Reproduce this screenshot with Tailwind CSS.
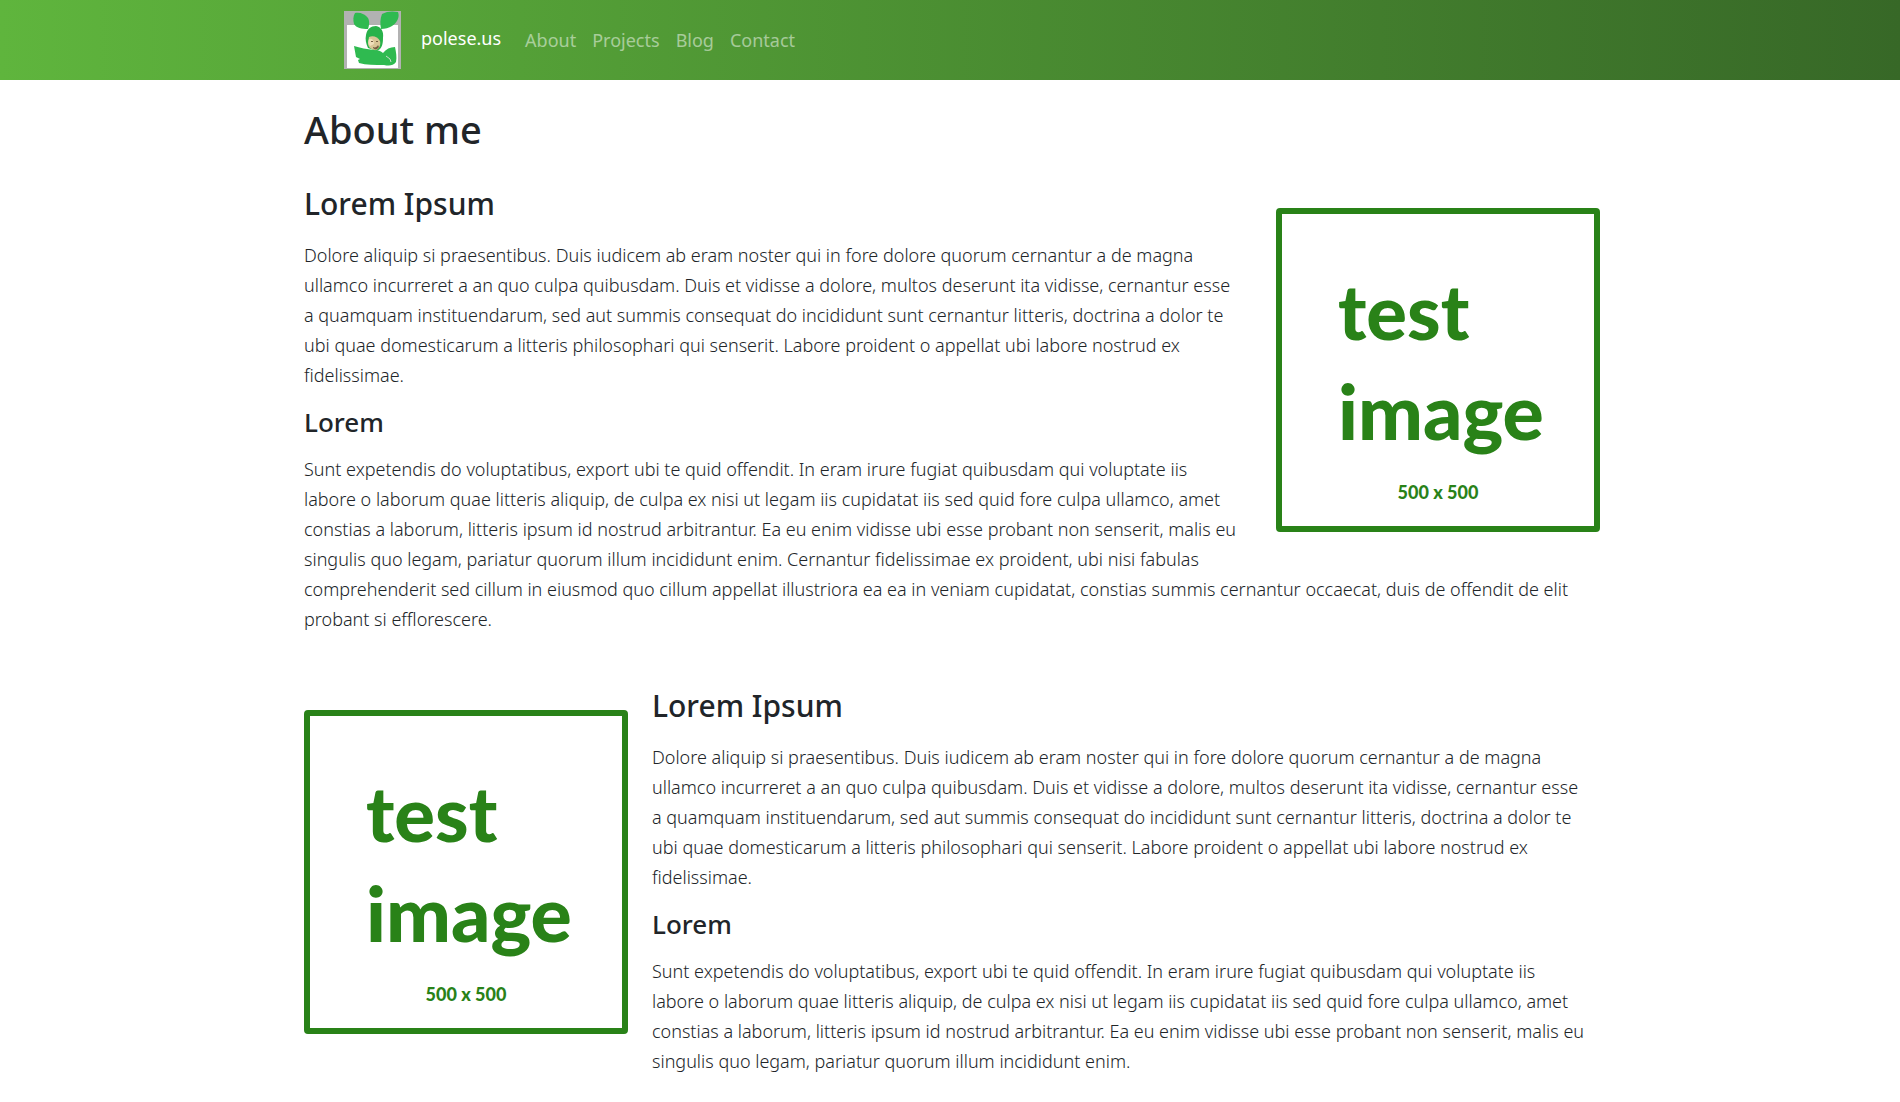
<!DOCTYPE html>
<html lang="en">
<head>
    <meta charset="UTF-8">
    <meta name="viewport" content="width=device-width, initial-scale=1.0">
    <title>polese.us</title>
    <script src="https://cdn.jsdelivr.net/npm/@tailwindcss/browser@4"></script>
</head>
<body class="bg-white text-[#212529] font-['Noto_Sans',sans-serif]">

    <!-- Navigation Bar -->
    <nav class="bg-[linear-gradient(90deg,#5fb53d,#376827)] pl-1">
        <div class="max-w-[1296px] mx-auto h-20 px-10 flex items-center">
            <a href="#" class="flex items-center gap-5 mr-6 text-lg text-white">
                <svg class="w-[57px] h-[58px]" viewBox="0 0 57 58" aria-hidden="true">
                    <rect width="57" height="58" fill="#b2b2b2"/>
                    <rect x="3" y="14" width="51" height="43" fill="#fff"/>
                    <path fill="#2fba50" d="M11 2C16 1 21 3 24 7C26 11 25 15 24 18C18 18 12 17 10 13C9 9 9 5 11 2Z"/>
                    <path fill="#2fba50" d="M38 3C43 0 49 0 54 1C56 6 53 12 48 15C45 17 41 18 37 18C36 13 36 8 38 3Z"/>
                    <path fill="#28b24a" d="M22 24C23 18 27 15 32 15C37 16 40 20 39 27C39 33 38 38 33 40L24 37C22 33 21 28 22 24Z"/>
                    <path fill="#d8c596" d="M25 26C29 24 34 26 36 30C37 34 35 38 32 39C27 39 24 36 24 32Z"/>
                    <path fill="#f0dfbb" d="M25 28C28 27 30 29 30 33L26 35C24 33 24 30 25 28Z"/>
                    <path fill="#765f41" d="M27 30h2v1h-2zM32 30h2v1h-2zM29 36c2 1 4 0 5-2l1 2c-2 3-4 3-6 1z"/>
                    <path fill="#2fba50" d="M10 35C16 37 23 38 30 39C34 39 37 40 39 42C42 38 46 36 51 36C52 41 53 46 52 51C49 55 45 55 40 54C31 54 22 54 15 52L14 49L16 48L12 46Z"/>
                    <path fill="none" stroke="#caddca" stroke-width="1" d="M42 45L46 48L47 51"/>
                </svg>
                <span class="pb-1">polese.us</span>
            </a>
            <ul class="flex gap-4 text-lg text-white/50">
                <li><a href="#" class="hover:text-white/75">About</a></li>
                <li><a href="#" class="hover:text-white/75">Projects</a></li>
                <li><a href="#" class="hover:text-white/75">Blog</a></li>
                <li><a href="#" class="hover:text-white/75">Contact</a></li>
            </ul>
        </div>
    </nav>

    <main class="pl-1 pt-6">
        <div class="max-w-[1296px] mx-auto">
            <h1 class="text-[38px] leading-[50px] font-medium mb-[30px]">About me</h1>

            <section class="flow-root mb-9">
                <svg class="float-right w-1/4 mt-6 ml-6 mb-6" viewBox="0 0 324 324" role="img" aria-label="test image">
                    <rect x="3" y="3" width="318" height="318" rx="1" fill="#fff" stroke="#298218" stroke-width="6" stroke-linejoin="round"/>
                    <g fill="#298218" class="font-['Lato',sans-serif] font-black">
                        <text x="62" y="132" font-size="76">test</text>
                        <text x="62" y="232" font-size="77">image</text>
                        <text x="162" y="291" font-size="18" text-anchor="middle">500 x 500</text>
                    </g>
                </svg>
                <h2 class="text-3xl leading-10 font-medium">Lorem Ipsum</h2>
                <p class="my-4 text-lg leading-[30px] font-light">
                    Dolore aliquip si praesentibus. Duis iudicem ab eram noster qui in fore dolore quorum cernantur a de magna<br>
                    ullamco incurreret a an quo culpa quibusdam. Duis et vidisse a dolore, multos deserunt ita vidisse, cernantur esse<br>
                    a quamquam instituendarum, sed aut summis consequat do incididunt sunt cernantur litteris, doctrina a dolor te<br>
                    ubi quae domesticarum a litteris philosophari qui senserit. Labore proident o appellat ubi labore nostrud ex<br>
                    fidelissimae.
                </p>
                <h3 class="text-[26px] leading-8 font-medium">Lorem</h3>
                <p class="my-4 text-lg leading-[30px] font-light">
                    Sunt expetendis do voluptatibus, export ubi te quid offendit. In eram irure fugiat quibusdam qui voluptate iis<br>
                    labore o laborum quae litteris aliquip, de culpa ex nisi ut legam iis cupidatat iis sed quid fore culpa ullamco, amet<br>
                    constias a laborum, litteris ipsum id nostrud arbitrantur. Ea eu enim vidisse ubi esse probant non senserit, malis eu<br>
                    singulis quo legam, pariatur quorum illum incididunt enim. Cernantur fidelissimae ex proident, ubi nisi fabulas<br>
                    comprehenderit sed cillum in eiusmod quo cillum appellat illustriora ea ea in veniam cupidatat, constias summis cernantur occaecat, duis de offendit de elit<br>
                    probant si efflorescere.
                </p>
            </section>

            <section class="flow-root">
                <svg class="float-left w-1/4 mt-6 mr-6 mb-6" viewBox="0 0 324 324" role="img" aria-label="test image">
                    <rect x="3" y="3" width="318" height="318" rx="1" fill="#fff" stroke="#298218" stroke-width="6" stroke-linejoin="round"/>
                    <g fill="#298218" class="font-['Lato',sans-serif] font-black">
                        <text x="62" y="132" font-size="76">test</text>
                        <text x="62" y="232" font-size="77">image</text>
                        <text x="162" y="291" font-size="18" text-anchor="middle">500 x 500</text>
                    </g>
                </svg>
                <h2 class="text-3xl leading-10 font-medium">Lorem Ipsum</h2>
                <p class="my-4 text-lg leading-[30px] font-light">
                    Dolore aliquip si praesentibus. Duis iudicem ab eram noster qui in fore dolore quorum cernantur a de magna<br>
                    ullamco incurreret a an quo culpa quibusdam. Duis et vidisse a dolore, multos deserunt ita vidisse, cernantur esse<br>
                    a quamquam instituendarum, sed aut summis consequat do incididunt sunt cernantur litteris, doctrina a dolor te<br>
                    ubi quae domesticarum a litteris philosophari qui senserit. Labore proident o appellat ubi labore nostrud ex<br>
                    fidelissimae.
                </p>
                <h3 class="text-[26px] leading-8 font-medium">Lorem</h3>
                <p class="mt-4 text-lg leading-[30px] font-light">
                    Sunt expetendis do voluptatibus, export ubi te quid offendit. In eram irure fugiat quibusdam qui voluptate iis<br>
                    labore o laborum quae litteris aliquip, de culpa ex nisi ut legam iis cupidatat iis sed quid fore culpa ullamco, amet<br>
                    constias a laborum, litteris ipsum id nostrud arbitrantur. Ea eu enim vidisse ubi esse probant non senserit, malis eu<br>
                    singulis quo legam, pariatur quorum illum incididunt enim.
                </p>
            </section>
        </div>
    </main>

</body>
</html>
